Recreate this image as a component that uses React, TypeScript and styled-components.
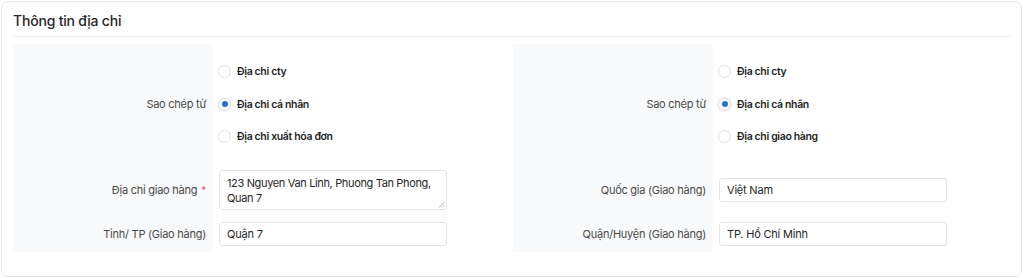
import React from "react";
import styled, { createGlobalStyle } from "styled-components";

const Global = createGlobalStyle`
  html, body { margin: 0; padding: 0; background: #ffffff; }
  body { font-family: Inter, "Noto Sans", sans-serif; -webkit-font-smoothing: antialiased; }
  * { box-sizing: border-box; }
`;

const Card = styled.section`
  margin: 1px 2px 0 1px;
  height: 276px;
  border: 1px solid #e6e6e6;
  border-radius: 7px;
  background: #fff;
  padding: 0 10px 24px 11px;
  display: flex;
  flex-direction: column;
`;

const Header = styled.div`
  height: 36px;
  display: flex;
  align-items: center;
  border-bottom: 1px solid #ececec;
  padding-top: 2px;
`;

const Title = styled.h2`
  margin: 0;
  font-size: 14px;
  font-weight: 500;
  color: #262626;
  letter-spacing: -0.2px;
`;

const Columns = styled.div`
  display: grid;
  grid-template-columns: 500px 500px;
  margin-top: 7px;
`;

const Column = styled.div`
  display: flex;
  flex-direction: column;
`;

const Row = styled.div<{ $h: number }>`
  display: grid;
  grid-template-columns: 200px 1fr;
  height: ${(p) => p.$h}px;
`;

const LabelCell = styled.div`
  background: #f8f9fa;
  display: flex;
  align-items: center;
  justify-content: flex-end;
  padding-right: 7px;
  font-size: 11px;
  letter-spacing: -0.25px;
  color: #4a4a4a;
`;

const Required = styled.span`
  color: #e05a7a;
  margin-left: 4px;
  font-size: 10px;
`;

const ControlCell = styled.div`
  display: flex;
  align-items: center;
  padding-left: 5px;
`;

const RadioGroup = styled.div`
  display: flex;
  flex-direction: column;
`;

const RadioItem = styled.label`
  height: 32.5px;
  display: flex;
  align-items: center;
  gap: 6px;
  font-size: 10.5px;
  letter-spacing: -0.35px;
  font-weight: 600;
  color: #1f1f1f;
`;

const Circle = styled.span<{ $on?: boolean }>`
  width: 13px;
  height: 13px;
  border-radius: 50%;
  border: 1px solid #e0e0e0;
  background: #fff;
  display: flex;
  align-items: center;
  justify-content: center;
  box-shadow: ${(p) => (p.$on ? "0 0 0 1px #eef2f8" : "none")};
  &::after {
    content: "";
    width: 6px;
    height: 6px;
    border-radius: 50%;
    background: ${(p) => (p.$on ? "#1f6fd6" : "transparent")};
  }
`;

const TextArea = styled.div`
  width: 228px;
  height: 40px;
  margin-left: 1px;
  border: 1px solid #e3e3e3;
  border-radius: 3px;
  padding: 5px 4px 5px 7px;
  font-size: 11px;
  letter-spacing: -0.35px;
  line-height: 14.5px;
  white-space: nowrap;
  color: #262626;
  position: relative;
`;

const Grip = styled.svg`
  position: absolute;
  right: 1px;
  bottom: 1px;
`;

const Input = styled.div`
  width: 228px;
  height: 24px;
  margin-left: 1px;
  border: 1px solid #e3e3e3;
  border-radius: 3px;
  padding: 0 7px;
  display: flex;
  align-items: center;
  font-size: 11px;
  letter-spacing: -0.2px;
  color: #262626;
`;

type Opt = { label: string; on?: boolean };

function CopyFrom({ options }: { options: Opt[] }) {
  return (
    <Row $h={120}>
      <LabelCell>Sao chép từ</LabelCell>
      <ControlCell>
        <RadioGroup>
          {options.map((o) => (
            <RadioItem key={o.label}>
              <Circle $on={o.on} />
              {o.label}
            </RadioItem>
          ))}
        </RadioGroup>
      </ControlCell>
    </Row>
  );
}

function InputRow({ label, value, h, required }: { label: string; value: string; h: number; required?: boolean }) {
  return (
    <Row $h={h}>
      <LabelCell>
        {label}
        {required && <Required>*</Required>}
      </LabelCell>
      <ControlCell>
        <Input>{value}</Input>
      </ControlCell>
    </Row>
  );
}

export default function App() {
  return (
    <>
      <Global />
      <Card>
        <Header>
          <Title>Thông tin địa chỉ</Title>
        </Header>
        <Columns>
          <Column>
            <CopyFrom
              options={[
                { label: "Địa chỉ cty" },
                { label: "Địa chỉ cá nhân", on: true },
                { label: "Địa chỉ xuất hóa đơn" },
              ]}
            />
            <Row $h={52}>
              <LabelCell>
                Địa chỉ giao hàng<Required>*</Required>
              </LabelCell>
              <ControlCell>
                <TextArea>
                  123 Nguyen Van Linh, Phuong Tan Phong,
                  <br />
                  Quan 7
                  <Grip width="7" height="7" viewBox="0 0 7 7">
                    <path d="M6.5 1 L1 6.5 M6.5 4 L4 6.5" stroke="#9a9a9a" strokeWidth="0.8" />
                  </Grip>
                </TextArea>
              </ControlCell>
            </Row>
            <InputRow label="Tỉnh/ TP (Giao hàng)" value="Quận 7" h={36} />
          </Column>
          <Column>
            <CopyFrom
              options={[
                { label: "Địa chỉ cty" },
                { label: "Địa chỉ cá nhân", on: true },
                { label: "Địa chỉ giao hàng" },
              ]}
            />
            <InputRow label="Quốc gia (Giao hàng)" value="Việt Nam" h={52} />
            <InputRow label="Quận/Huyện (Giao hàng)" value="TP. Hồ Chí Minh" h={36} />
          </Column>
        </Columns>
      </Card>
    </>
  );
}
